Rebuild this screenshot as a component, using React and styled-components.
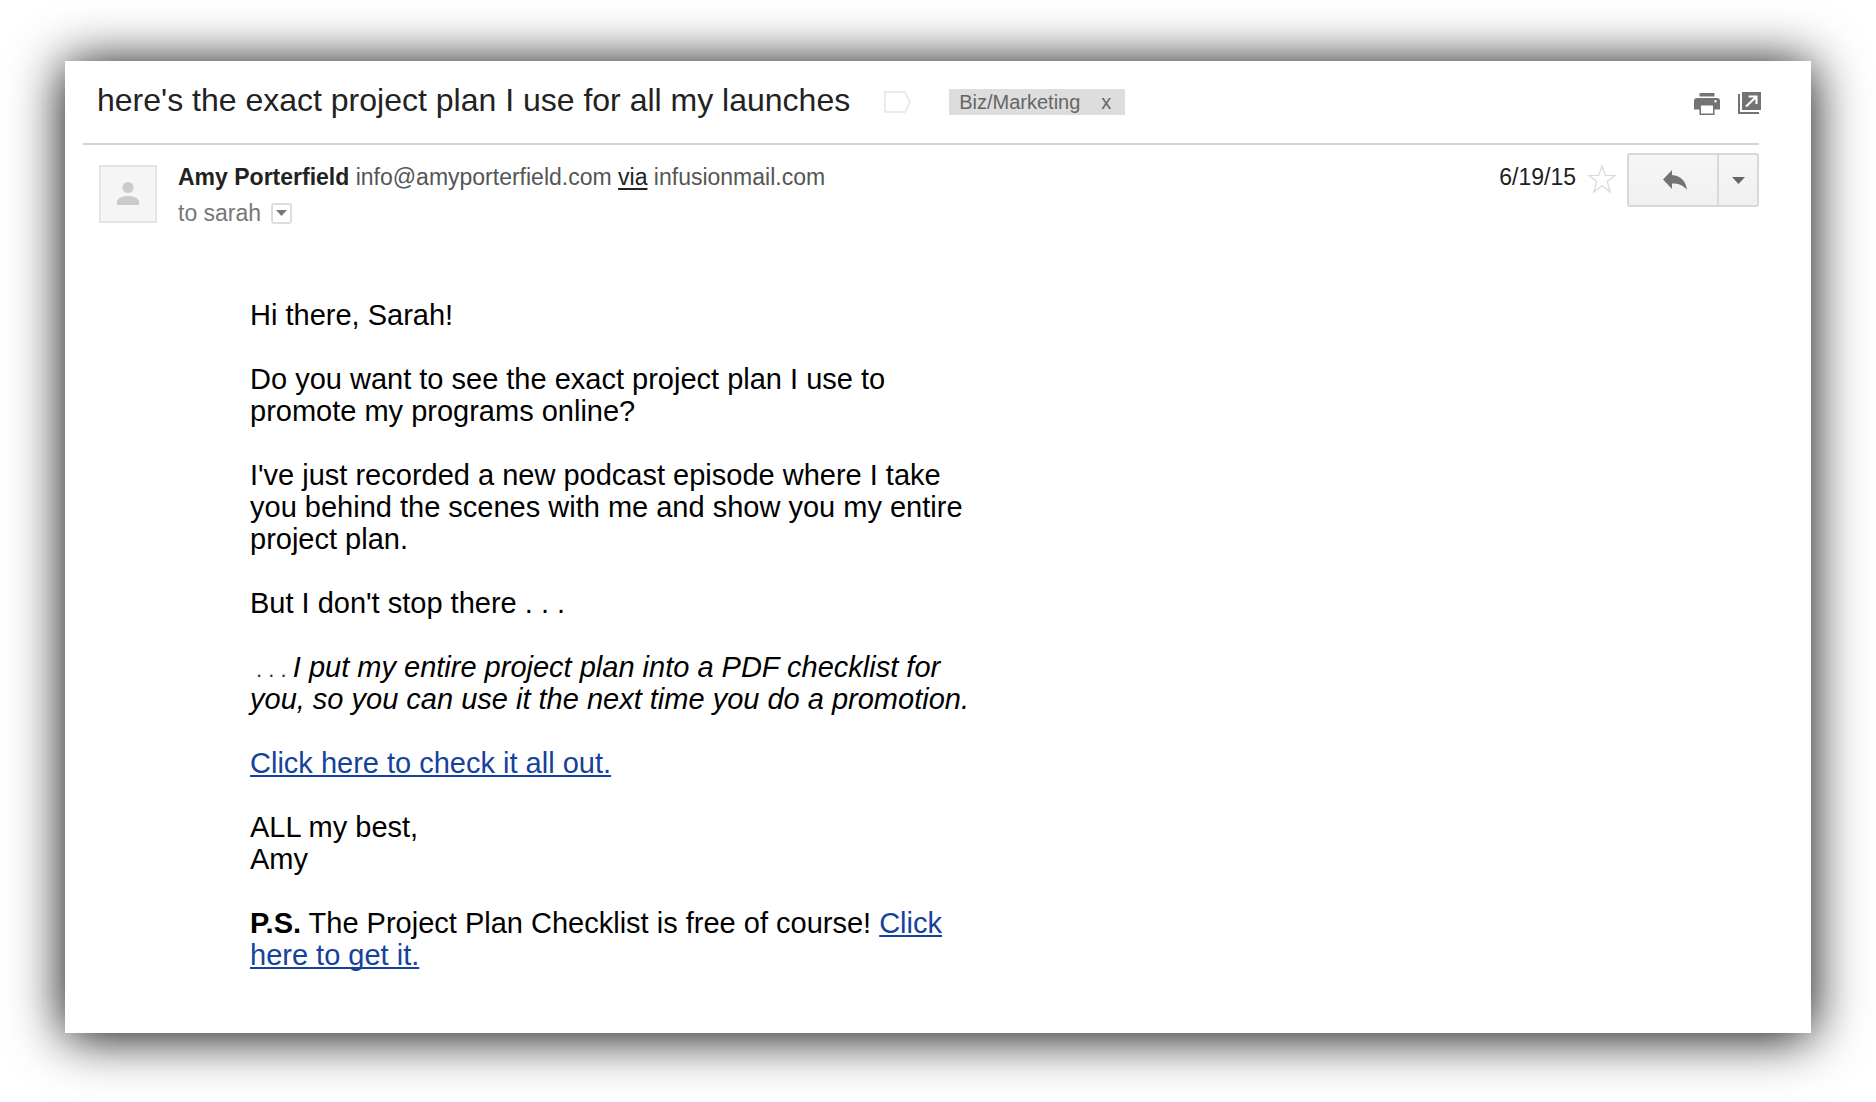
import React from 'react';
import styled, { createGlobalStyle } from 'styled-components';

const App = () => {
  return (
    <>
      <GlobalStyle />
      <Page>
        <Message>
          <Header>
            <Subject>here's the exact project plan I use for all my launches</Subject>
            <TagButton aria-label='Mark as important'>
              <svg width='27' height='22' viewBox='0 0 27 22'>
                <path d='M1 1h20l5 10-5 10H1z' fill='#fff' stroke='#ebebeb' strokeWidth='2' />
              </svg>
            </TagButton>
            <Label>
              <LabelLink href='#label'>Biz/Marketing</LabelLink>
              <LabelRemove aria-label='Remove label'>x</LabelRemove>
            </Label>
            <HeaderActions>
              <IconButton aria-label='Print all'>
                <PrintIcon />
              </IconButton>
              <IconButton aria-label='In new window'>
                <PopOutIcon />
              </IconButton>
            </HeaderActions>
          </Header>
          <Meta>
            <Avatar>
              <svg width='24' height='24' viewBox='0 0 24 24' fill='#cbcbcb'>
                <circle cx='12' cy='5.500' r='5.500' />
                <path d='M1 23v-3c0-4 6-6 11-6s11 2 11 6v3z' />
              </svg>
            </Avatar>
            <People>
              <Sender>
                <strong>Amy Porterfield</strong> info@amyporterfield.com <a href='#via'>via</a>{' '}
                infusionmail.com
              </Sender>
              <Recipient>
                to sarah
                <DetailsButton aria-label='Show details'>
                  <svg width='11' height='6' viewBox='0 0 11 6'>
                    <path d='M0 0h11L5.500 6z' fill='#777' />
                  </svg>
                </DetailsButton>
              </Recipient>
            </People>
            <SentDate>6/19/15</SentDate>
            <StarButton aria-label='Star'>
              <svg width='28' height='28' viewBox='0 0 28 28'>
                <path
                  d='M14 1l3.300 9.500h9.700l-7.700 6 2.900 10.500L14 20.800 5.800 27l2.900-10.500-7.700-6h9.700z'
                  fill='#fff'
                  stroke='#d8d8d8'
                  strokeWidth='1.200'
                />
              </svg>
            </StarButton>
            <ReplyGroup>
              <ReplyButton aria-label='Reply'>
                <svg width='24' height='20' viewBox='0 0 24 20' fill='#737373'>
                  <path d='M9 0v5c8 .500 14 5.500 15 15-4-5-8-6.500-15-6.500V19L0 9.500z' />
                </svg>
              </ReplyButton>
              <MoreButton aria-label='More'>
                <svg width='13' height='7' viewBox='0 0 13 7'>
                  <path d='M0 0h13L6.500 7z' fill='#666' />
                </svg>
              </MoreButton>
            </ReplyGroup>
          </Meta>
          <Body>
            <p>Hi there, Sarah!</p>
            <p>Do you want to see the exact project plan I use to promote my programs online?</p>
            <p>
              I've just recorded a new podcast episode where I take you behind the scenes with me and
              show you my entire project plan.
            </p>
            <p>But I don't stop there . . .</p>
            <p>
              <Dots>&nbsp;. . . </Dots>
              <em>
                I put my entire project plan into a PDF checklist for you, so you can use it the next
                time you do a promotion.
              </em>
            </p>
            <p>
              <a href='#check'>Click here to check it all out.</a>
            </p>
            <p>
              ALL my best,
              <br />
              Amy
            </p>
            <p>
              <strong>P.S.</strong> The Project Plan Checklist is free of course!{' '}
              <a href='#get'>Click here to get it.</a>
            </p>
          </Body>
        </Message>
      </Page>
    </>
  );
};

const PrintIcon = () => (
  <svg width='26' height='22' viewBox='0 0 26 22' fill='#737373'>
    <path d='M5.500 0h15v3.500h-15z' />
    <path
      fillRule='evenodd'
      d='M3 5h20a3 3 0 0 1 3 3v8.500h-5.500V22h-15v-5.500H0V8a3 3 0 0 1 3-3zM7 12.500v8h12v-8zM21.500 7a1.200 1.200 0 1 0 0 2.500 1.200 1.200 0 0 0 0-2.500z'
    />
  </svg>
);

const PopOutIcon = () => (
  <svg width='23' height='22' viewBox='0 0 23 22'>
    <path d='M4 0h19v18H4z' fill='#737373' />
    <path d='M1 2v19h20' fill='none' stroke='#737373' strokeWidth='2' />
    <path d='M8 14.500L18 5M10.500 4.500H18.500V12' fill='none' stroke='#fff' strokeWidth='2.200' />
  </svg>
);

const GlobalStyle = createGlobalStyle`
  * {
    box-sizing: border-box;
  }

  body {
    margin: 0;
    background: #fff;
    font-family: 'Liberation Sans', Arial, sans-serif;
  }

  button {
    padding: 0;
    border: 0;
    background: none;
    font-family: inherit;
    cursor: pointer;
  }

  svg {
    display: block;
  }
`;

const Page = styled.main`
  padding: 61px 65px 69px;
`;

const Message = styled.article`
  padding: 0 52px 62px 18px;
  background: #fff;
  box-shadow: 0 3px 50px #000;
`;

const Header = styled.header`
  display: flex;
  align-items: center;
  height: 84px;
  padding-left: 14px;
  border-bottom: 2px solid #d4d4d4;
`;

const Subject = styled.h1`
  margin: 0;
  padding-bottom: 4px;
  color: #222;
  font-size: 32px;
  font-weight: normal;
  line-height: 36px;
`;

const TagButton = styled.button`
  margin: 0 38px 0 34px;
`;

const Label = styled.div`
  display: flex;
  align-items: center;
  height: 26px;
  padding: 0 14px 0 10px;
  background: #ddd;
  color: #666;
  font-size: 20px;
`;

const LabelLink = styled.a`
  color: inherit;
  text-decoration: none;
`;

const LabelRemove = styled.button`
  margin-left: 21px;
  color: inherit;
  font-size: 20px;
`;

const HeaderActions = styled.div`
  display: flex;
  gap: 18px;
  margin: 2px -2px 0 auto;
`;

const IconButton = styled.button`
  &:first-child {
    padding-top: 2px;
  }
`;

const Meta = styled.section`
  display: flex;
  align-items: flex-start;
  padding: 8px 0 0 16px;
`;

const Avatar = styled.div`
  display: flex;
  align-items: center;
  justify-content: center;
  width: 58px;
  height: 58px;
  margin: 12px 21px 0 0;
  border: 2px solid #e4e4e4;
  background: #f5f5f5;
`;

const People = styled.div`
  flex: 1;
  padding-top: 6px;
  font-size: 23px;
  line-height: 36px;
`;

const Sender = styled.div`
  color: #555;

  strong {
    color: #222;
  }

  a {
    color: #222;
    text-decoration-thickness: 2px;
    text-underline-offset: 3px;
  }
`;

const Recipient = styled.div`
  display: flex;
  align-items: center;
  color: #777;
`;

const DetailsButton = styled.button`
  display: flex;
  align-items: center;
  justify-content: center;
  width: 21px;
  height: 21px;
  margin-left: 10px;
  border: 2px solid #ddd;
  border-radius: 3px;
`;

const SentDate = styled.time`
  padding-top: 6px;
  color: #222;
  font-size: 23px;
  line-height: 36px;
`;

const StarButton = styled.button`
  margin: 12px 11px 0 12px;
`;

const ReplyGroup = styled.div`
  display: flex;
  height: 54px;
  border: 2px solid #d8d8d8;
  border-radius: 3px;
  background: linear-gradient(#f6f6f6, #f0f0f0);
`;

const ReplyButton = styled.button`
  display: flex;
  align-items: center;
  justify-content: center;
  width: 88px;
  padding-left: 4px;
`;

const MoreButton = styled(ReplyButton)`
  width: 40px;
  padding-left: 0;
  border-left: 2px solid #d8d8d8;
`;

const Body = styled.div`
  max-width: 887px;
  padding: 68px 0 0 167px;
  color: #000;
  font-size: 29px;
  line-height: 32px;

  p {
    margin: 0 0 32px;
  }

  p:last-child {
    margin-bottom: 0;
  }

  a {
    color: #15429c;
    text-decoration-thickness: 2px;
    text-underline-offset: 2px;
    text-decoration-skip-ink: none;
  }
`;

const Dots = styled.span`
  color: #333;
  font-size: 22px;
  line-height: 22px;
`;

export default App;
